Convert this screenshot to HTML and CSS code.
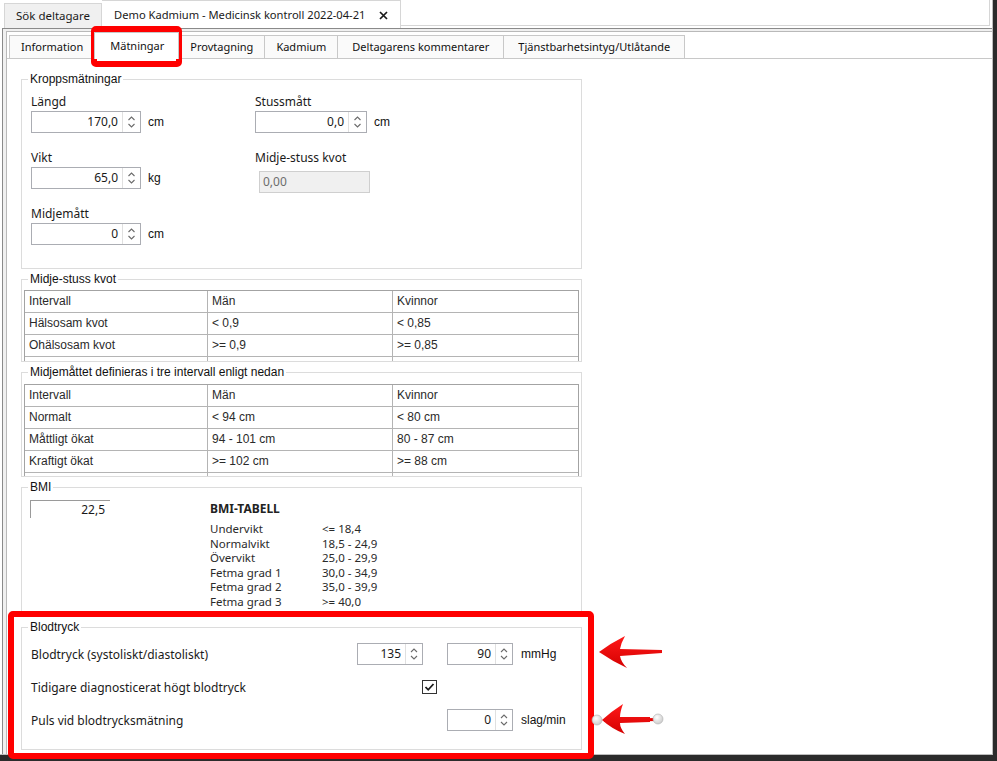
FILE: index.html
```html
<!DOCTYPE html>
<html lang="sv">
<head>
<meta charset="utf-8">
<title>Demo Kadmium - Medicinsk kontroll</title>
<link rel="stylesheet" href="styles.css">
</head>
<body>
<div class="screen">
  <div class="app">
    <div class="doc-tabs">
      <div class="doc-tab">Sök deltagare</div>
      <div class="doc-tab active">
        <span>Demo Kadmium - Medicinsk kontroll 2022-04-21</span>
        <svg class="close" width="9" height="9" viewBox="0 0 9 9"><path d="M1 1 L8 8 M8 1 L1 8" stroke="#1a1a1a" stroke-width="1.7" fill="none"/></svg>
      </div>
      <div class="doc-fill"></div>
    </div>
    <div class="doc-frame">
      <div class="tabctl">
        <div class="tabs">
          <div class="tab">Information</div>
          <div class="tab active">Mätningar</div>
          <div class="tab">Provtagning</div>
          <div class="tab">Kadmium</div>
          <div class="tab wide">Deltagarens kommentarer</div>
          <div class="tab wide">Tjänstbarhetsintyg/Utlåtande</div>
        </div>
        <div class="panel">
          <fieldset class="group g-body">
            <legend>Kroppsmätningar</legend>
            <div class="body-grid">
              <div class="field">
                <div class="lbl">Längd</div>
                <div class="inrow">
                  <div class="spin w110"><span class="val">170,0</span><span class="arr"><svg width="17" height="20" viewBox="0 0 17 20"><path d="M5.5 8 L8.5 5 L11.5 8 M5.5 12 L8.5 15 L11.5 12" stroke="#6b6b6b" stroke-width="1.1" fill="none"/></svg></span></div>
                  <span class="unit">cm</span>
                </div>
              </div>
              <div class="field">
                <div class="lbl">Stussmått</div>
                <div class="inrow">
                  <div class="spin w112"><span class="val">0,0</span><span class="arr"><svg width="17" height="20" viewBox="0 0 17 20"><path d="M5.5 8 L8.5 5 L11.5 8 M5.5 12 L8.5 15 L11.5 12" stroke="#6b6b6b" stroke-width="1.1" fill="none"/></svg></span></div>
                  <span class="unit">cm</span>
                </div>
              </div>
              <div class="field">
                <div class="lbl">Vikt</div>
                <div class="inrow">
                  <div class="spin w110"><span class="val">65,0</span><span class="arr"><svg width="17" height="20" viewBox="0 0 17 20"><path d="M5.5 8 L8.5 5 L11.5 8 M5.5 12 L8.5 15 L11.5 12" stroke="#6b6b6b" stroke-width="1.1" fill="none"/></svg></span></div>
                  <span class="unit">kg</span>
                </div>
              </div>
              <div class="field">
                <div class="lbl">Midje-stuss kvot</div>
                <div class="disabled">0,00</div>
              </div>
              <div class="field">
                <div class="lbl">Midjemått</div>
                <div class="inrow">
                  <div class="spin w110"><span class="val">0</span><span class="arr"><svg width="17" height="20" viewBox="0 0 17 20"><path d="M5.5 8 L8.5 5 L11.5 8 M5.5 12 L8.5 15 L11.5 12" stroke="#6b6b6b" stroke-width="1.1" fill="none"/></svg></span></div>
                  <span class="unit">cm</span>
                </div>
              </div>
            </div>
          </fieldset>

          <fieldset class="group g-ratio">
            <legend>Midje-stuss kvot</legend>
            <div class="tbl tbl-ratio">
              <div class="tr"><div class="td">Intervall</div><div class="td">Män</div><div class="td">Kvinnor</div></div>
              <div class="tr"><div class="td">Hälsosam kvot</div><div class="td">&lt; 0,9</div><div class="td">&lt; 0,85</div></div>
              <div class="tr"><div class="td">Ohälsosam kvot</div><div class="td">&gt;= 0,9</div><div class="td">&gt;= 0,85</div></div>
              <div class="tr"><div class="td"></div><div class="td"></div><div class="td"></div></div>
            </div>
          </fieldset>

          <fieldset class="group g-waist">
            <legend>Midjemåttet definieras i tre intervall enligt nedan</legend>
            <div class="tbl tbl-waist">
              <div class="tr"><div class="td">Intervall</div><div class="td">Män</div><div class="td">Kvinnor</div></div>
              <div class="tr"><div class="td">Normalt</div><div class="td">&lt; 94 cm</div><div class="td">&lt; 80 cm</div></div>
              <div class="tr"><div class="td">Måttligt ökat</div><div class="td">94 - 101 cm</div><div class="td">80 - 87 cm</div></div>
              <div class="tr"><div class="td">Kraftigt ökat</div><div class="td">&gt;= 102 cm</div><div class="td">&gt;= 88 cm</div></div>
              <div class="tr"><div class="td"></div><div class="td"></div><div class="td"></div></div>
            </div>
          </fieldset>

          <fieldset class="group g-bmi">
            <legend>BMI</legend>
            <div class="bmi-row">
              <div class="bmi-box">22,5</div>
              <div class="bmi-table">
                <div class="bmi-title">BMI-TABELL</div>
                <div class="bmi-list">
                  <span>Undervikt</span><span>&lt;= 18,4</span>
                  <span>Normalvikt</span><span>18,5 - 24,9</span>
                  <span>Övervikt</span><span>25,0 - 29,9</span>
                  <span>Fetma grad 1</span><span>30,0 - 34,9</span>
                  <span>Fetma grad 2</span><span>35,0 - 39,9</span>
                  <span>Fetma grad 3</span><span>&gt;= 40,0</span>
                </div>
              </div>
            </div>
          </fieldset>

          <fieldset class="group g-bp">
            <legend>Blodtryck</legend>
            <div class="bp-grid">
              <div class="bp-lbl">Blodtryck (systoliskt/diastoliskt)</div>
              <div class="spin w66 c2"><span class="val">135</span><span class="arr"><svg width="16" height="20" viewBox="0 0 16 20"><path d="M5 8 L8 5 L11 8 M5 12 L8 15 L11 12" stroke="#6b6b6b" stroke-width="1.1" fill="none"/></svg></span></div>
              <div class="spin w66 c4"><span class="val">90</span><span class="arr"><svg width="16" height="20" viewBox="0 0 16 20"><path d="M5 8 L8 5 L11 8 M5 12 L8 15 L11 12" stroke="#6b6b6b" stroke-width="1.1" fill="none"/></svg></span></div>
              <div class="unit c5">mmHg</div>

              <div class="bp-lbl">Tidigare diagnosticerat högt blodtryck</div>
              <div class="check c2"><svg width="15" height="14" viewBox="0 0 15 14"><rect x="0.5" y="0.5" width="14" height="13" fill="#fff" stroke="#333"/><path d="M3.5 7 L6.2 9.8 L11.5 4" stroke="#1a1a1a" stroke-width="1.8" fill="none"/></svg></div>

              <div class="bp-lbl">Puls vid blodtrycksmätning</div>
              <div class="spin w66 c4"><span class="val">0</span><span class="arr"><svg width="16" height="20" viewBox="0 0 16 20"><path d="M5 8 L8 5 L11 8 M5 12 L8 15 L11 12" stroke="#6b6b6b" stroke-width="1.1" fill="none"/></svg></span></div>
              <div class="unit c5">slag/min</div>
            </div>
          </fieldset>
        </div>
      </div>
    </div>
  </div>

  <div class="mark mark-tab"></div>
  <div class="mark mark-bp"></div>
  <svg class="arrows" width="80" height="112" viewBox="0 0 80 112">
    <defs>
      <linearGradient id="rg" x1="0" y1="0" x2="0" y2="1">
        <stop offset="0" stop-color="#ff1a1a"/>
        <stop offset="1" stop-color="#d40000"/>
      </linearGradient>
      <radialGradient id="knob" cx="0.4" cy="0.35" r="0.7">
        <stop offset="0" stop-color="#ffffff"/>
        <stop offset="1" stop-color="#c8c8c8"/>
      </radialGradient>
    </defs>
    <path d="M9 22 Q21 13 35 6 Q31 13 30 19 L72 20 L72 23 L30 26 Q31 32 37 38 Q22 31 9 22 Z" fill="url(#rg)"/>
    <path d="M14 89 L68 88 L68 91 L14 92 Z" fill="#e60000"/>
    <circle cx="7" cy="90" r="5" fill="url(#knob)" stroke="#b0b0b0" stroke-width="0.6"/>
    <path d="M12 90 Q22 81 33 74 Q30 82 30 87 L60 87 L60 92 L30 93 Q30 98 35 104 Q22 99 12 90 Z" fill="url(#rg)"/>
    <circle cx="68" cy="89" r="5" fill="url(#knob)" stroke="#b0b0b0" stroke-width="0.6"/>
  </svg>
</div>
</body>
</html>
```
FILE: styles.css
```css
* { box-sizing: border-box; }
html, body { margin: 0; padding: 0; }
body {
  background: #2b2b2b;
  font-family: "Noto Sans", "Liberation Sans", sans-serif;
  font-size: 12px;
  color: #1a1a1a;
}
.screen {
  position: relative;
  width: 997px;
  height: 761px;
  background: #2b2b2b;
  overflow: hidden;
}
.app {
  width: 993px;
  height: 755px;
  background: #fff;
  display: flex;
  flex-direction: column;
  border-right: 1px solid #bdbdbd;
  border-bottom: 1px solid #bdbdbd;
}

/* document tabs */
.doc-tabs {
  display: flex;
  height: 28px;
  flex: none;
  padding-left: 4px;
}
.doc-tab {
  margin-top: 3px;
  height: 25px;
  padding: 0 11px;
  border: 1px solid #d6d6d6;
  border-bottom: none;
  background: #f0f0f0;
  font-size: 11.5px;
  line-height: 23px;
  white-space: nowrap;
}
.doc-tab.active {
  margin-top: 0;
  height: 28px;
  background: #fff;
  padding: 0 12px 0 12px;
  display: flex;
  align-items: center;
  gap: 14px;
  border-left: none;
}
.doc-tab.active span { line-height: 26px; font-size: 11.15px; }
.close { flex: none; margin-top: 1px; }
.doc-fill {
  flex: 1;
  height: 26px;
  border-right: 1px solid #d6d6d6;
  border-bottom: 1px solid #d6d6d6;
  margin-right: 2px;
}
.doc-frame {
  flex: 1;
  margin-left: 2px;
  border-left: 1px solid #8a8a8a;
  border-top: 1px solid #8a8a8a;
  background: #f0f0f0;
  padding: 2px 0 0 3px;
  display: flex;
}
.tabctl {
  flex: 1;
  background: #fff;
  border-left: 1px solid #b9b9b9;
  border-top: 1px solid #b9b9b9;
  display: flex;
  flex-direction: column;
}

/* inner tabs */
.tabs {
  display: flex;
  align-items: flex-end;
  height: 27px;
  padding-left: 2px;
  border-bottom: 1px solid #c8c8c8;
  flex: none;
}
.tab {
  height: 23px;
  border: 1px solid #c8c8c8;
  border-bottom: none;
  margin-right: -1px;
  background: #fafafa;
  font-size: 11px;
  line-height: 22px;
  padding: 0 11px;
  white-space: nowrap;
  color: #111;
}
.tab.wide { padding: 0 14px 0 14px; }
.tab.active {
  height: 27px;
  margin-bottom: -1px;
  background: #fff;
  position: relative;
  z-index: 1;
  padding: 0 14px 0 15px;
  line-height: 25px;
}

/* panel */
.panel {
  flex: 1;
  padding: 13px 0 0 14px;
  display: flex;
  flex-direction: column;
  gap: 3px;
}
.group {
  margin: 0;
  padding: 0;
  border: 1px solid #dcdcdc;
  width: 561px;
  min-width: 0;
}
.group legend {
  margin-left: 6px;
  padding: 0 2px;
  font-family: "Liberation Sans", Arial, sans-serif;
  font-size: 12px;
  line-height: 14px;
  color: #111;
}
.g-body { height: 197px; }
.g-ratio { height: 90px; }
.g-waist { height: 112px; }
.g-bmi { height: 137px; }
.g-bp { height: 130px; }

.body-grid {
  display: grid;
  grid-template-columns: 224px 1fr;
  row-gap: 17px;
  padding: 8px 0 0 9px;
}
.lbl {
  line-height: 15px;
  margin-bottom: 2px;
  font-size: 12px;
}
.inrow {
  display: flex;
  align-items: center;
}
.spin {
  display: flex;
  height: 22px;
  border: 1px solid #abadb3;
  background: #fff;
}
.w110 { width: 110px; }
.w112 { width: 112px; }
.w66 { width: 66px; }
.spin .val {
  flex: 1;
  text-align: right;
  padding-right: 4px;
  line-height: 20px;
  font-size: 12px;
}
.spin .arr {
  flex: none;
  border-left: 1px solid #e0e0e0;
  display: flex;
}
.unit {
  margin-left: 7px;
  font-family: "Liberation Sans", Arial, sans-serif;
  font-size: 12px;
  color: #111;
}
.disabled {
  width: 111px;
  height: 22px;
  margin: 6px 0 -4px 4px;
  background: #f0f0f0;
  border: 1px solid #cfcfcf;
  color: #6d6d6d;
  padding-left: 3px;
  line-height: 20px;
}

/* tables */
.tbl {
  width: 555px;
  margin-left: 2px;
  border: 1px solid #a3a3a3;
  border-bottom: none;
  overflow: hidden;
  font-family: "Liberation Sans", Arial, sans-serif;
  font-size: 12px;
  color: #2a2a2a;
}
.tbl-ratio { margin-top: 4px; height: 71px; }
.tbl-waist { margin-top: 5px; height: 92px; }
.tr {
  display: grid;
  grid-template-columns: 182px 185px 1fr;
  height: 22px;
  border-bottom: 1px solid #b4b4b4;
}
.td {
  padding-left: 4px;
  line-height: 21px;
  white-space: nowrap;
}
.td + .td { border-left: 1px solid #b4b4b4; }

/* BMI */
.bmi-row {
  display: flex;
  align-items: flex-start;
  padding: 6px 0 0 8px;
}
.bmi-box {
  width: 80px;
  height: 18px;
  border-top: 1px solid #9a9a9a;
  border-left: 1px solid #9a9a9a;
  text-align: right;
  padding-right: 5px;
  line-height: 18px;
  font-size: 12px;
}
.bmi-table {
  margin-left: 100px;
  margin-top: 1px;
}
.bmi-title {
  font-weight: 700;
  font-size: 12px;
  line-height: 16px;
  color: #222;
}
.bmi-list {
  margin-top: 5px;
  display: grid;
  grid-template-columns: 112px auto;
  font-size: 11.5px;
  line-height: 14.5px;
  color: #2a2a2a;
}

/* Blodtryck */
.bp-grid {
  display: grid;
  grid-template-columns: 326px 66px 24px 66px auto;
  grid-auto-rows: 22px;
  row-gap: 11px;
  padding: 9px 0 0 9px;
}
.bp-lbl {
  grid-column: 1;
  align-self: center;
  font-size: 12px;
  color: #1a1a1a;
}
.c2 { grid-column: 2; }
.c4 { grid-column: 4; }
.c5 { grid-column: 5; align-self: center; margin-left: 8px; }
.check {
  align-self: center;
  justify-self: start;
  margin-left: 65px;
  width: 15px;
  height: 14px;
}
.check svg { display: block; }

/* annotations */
.mark {
  position: absolute;
  border: 6px solid #ff0000;
  border-radius: 5px;
  pointer-events: none;
}
.mark-tab { left: 91px; top: 26px; width: 91px; height: 41px; }
.mark-bp { left: 8px; top: 611px; width: 586px; height: 148px; }
.arrows { position: absolute; left: 590px; top: 630px; }
```
